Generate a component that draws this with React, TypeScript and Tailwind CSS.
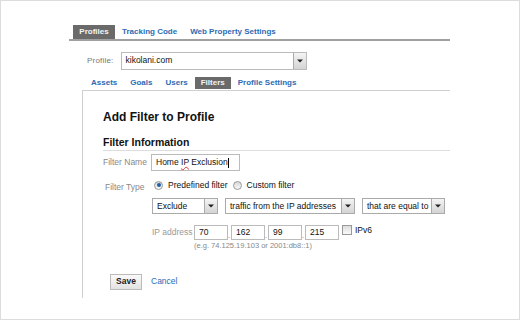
const font = { fontFamily: '"Liberation Sans", Arial, sans-serif' }

function Arrow() {
  return (
    <div className="w-[13px] self-stretch border-l border-[#aaa] bg-gradient-to-b from-[#f4f4f4] to-[#d4d4d4] flex items-center justify-center">
      <svg width="6" height="4" viewBox="0 0 6 4">
        <path d="M0 0.5h6L3 3.5z" fill="#222" />
      </svg>
    </div>
  )
}

function Select({ value, width }: { value: string; width: string }) {
  return (
    <div className={`${width} h-[16px] flex border border-[#aaa] bg-white`}>
      <div className="flex-1 pl-[4px] text-[8.5px] leading-[14px] text-[#111]">{value}</div>
      <Arrow />
    </div>
  )
}

function Radio({ checked }: { checked?: boolean }) {
  return (
    <span className="w-[9px] h-[9px] rounded-full border border-[#999] bg-gradient-to-b from-[#d8d8d8] to-[#f8f8f8] flex items-center justify-center">
      {checked && <span className="w-[4px] h-[4px] rounded-full bg-[#1a5fa8]" />}
    </span>
  )
}

function IpBox({ v }: { v: string }) {
  return (
    <div className="w-[34px] h-[15px] border border-[#bbb] bg-white pl-[4px] text-[8.5px] leading-[13px] text-[#111]">{v}</div>
  )
}

export default function App() {
  const blue = "text-[#2d6bb3]"
  return (
    <div style={font} className="w-[520px] h-[320px] border border-[#dcdcdc] bg-white pl-[68px] pt-[25px] overflow-hidden">
      <div className="w-[381px]">
        <div className="flex items-end h-[15px] border-b-2 border-[#a0a0a0] text-[8px] font-bold">
          <div className="ml-[4px] h-[14px] w-[42px] bg-[#6a6a6a] text-[#f4f4f4] flex items-center justify-center">Profiles</div>
          <div className={`ml-[7px] h-[14px] leading-[14px] ${blue}`}>Tracking Code</div>
          <div className={`ml-[13px] h-[14px] leading-[14px] ${blue}`}>Web Property Settings</div>
        </div>

        <div className="flex items-center mt-[11px] pl-[18px]">
          <span className="text-[8px] text-[#777] tracking-[0.2px]">Profile:</span>
          <div className="ml-[7px] w-[186px] h-[18px] flex border border-[#bbb] bg-white">
            <div className="flex-1 pl-[4px] text-[8.5px] leading-[14px] text-[#111]">kikolani.com</div>
            <Arrow />
          </div>
        </div>

        <div className="flex items-end h-[14px] mt-[5px] pl-[22px] text-[8px] font-bold">
          <div className={`leading-[12px] ${blue}`}>Assets</div>
          <div className={`ml-[13px] leading-[12px] ${blue}`}>Goals</div>
          <div className={`ml-[13px] leading-[12px] ${blue}`}>Users</div>
          <div className="ml-[7px] h-[12px] w-[36px] bg-[#6a6a6a] text-[#f4f4f4] flex items-center justify-center">Filters</div>
          <div className={`ml-[7px] leading-[12px] ${blue}`}>Profile Settings</div>
        </div>

        <div className="ml-[13px] mt-[1px] h-[208px] border-l border-t border-[#cfcfcf] pl-[20px] pt-[18px]">
          <div className="text-[12px] font-bold text-[#111] leading-[16px]">Add Filter to Profile</div>

          <div className="mt-[10px] text-[10.5px] font-bold text-[#111] leading-[14px] pb-[1px] border-b border-[#ddd]">Filter Information</div>

          <div className="flex items-center mt-[3px]">
            <span className="w-[48px] text-[8.5px] text-[#888]">Filter Name</span>
            <div className="w-[89px] h-[17px] border border-[#bbb] bg-white pl-[4px] text-[8.5px] leading-[15px] text-[#111]">
              Home <span className="underline decoration-wavy decoration-[#d33] decoration-[0.5px] underline-offset-1">IP</span> Exclusion<span className="inline-block w-[1px] h-[10px] bg-black align-middle ml-[0.5px]" />
            </div>
          </div>

          <div className="flex items-center mt-[6px]">
            <span className="w-[48px] pl-[2px] text-[8.5px] text-[#888] mt-[4px]">Filter Type</span>
            <div className="ml-[3px] flex items-center gap-[5px] text-[8.5px] text-[#111]">
              <Radio checked />
              <span>Predefined filter</span>
              <Radio />
              <span>Custom filter</span>
            </div>
          </div>

          <div className="flex items-center gap-[7px] mt-[4px] ml-[49px]">
            <Select value="Exclude" width="w-[66px]" />
            <Select value="traffic from the IP addresses" width="w-[130px]" />
            <Select value="that are equal to" width="w-[83px]" />
          </div>

          <div className="flex items-start mt-[11px] ml-[49px]">
            <span className="w-[42px] text-[8.5px] text-[#999] leading-[15px]">IP address</span>
            <div>
              <div className="flex items-end">
                <IpBox v="70" />
                <span className="w-[3px] text-[7px] leading-[8px] text-[#555]">.</span>
                <IpBox v="162" />
                <span className="w-[3px] text-[7px] leading-[8px] text-[#555]">.</span>
                <IpBox v="99" />
                <span className="w-[3px] text-[7px] leading-[8px] text-[#555]">.</span>
                <IpBox v="215" />
              </div>
              <div className="mt-[1px] text-[7.5px] text-[#888] leading-[10px]">(e.g. 74.125.19.103 or 2001:db8::1)</div>
            </div>
            <span className="ml-[3px] w-[10px] h-[10px] border border-[#999] bg-gradient-to-b from-[#ddd] to-[#fafafa]" />
            <span className="ml-[3px] text-[8.5px] text-[#111] leading-[11px]">IPv6</span>
          </div>

          <div className="flex items-center mt-[23px] ml-[7px]">
            <div className="w-[32px] h-[16px] border border-[#bbb] bg-gradient-to-b from-[#fafafa] to-[#e2e2e2] text-[8.5px] font-bold text-[#222] flex items-center justify-center">Save</div>
            <span className={`ml-[9px] text-[8.5px] ${blue}`}>Cancel</span>
          </div>
        </div>
      </div>
    </div>
  )
}
